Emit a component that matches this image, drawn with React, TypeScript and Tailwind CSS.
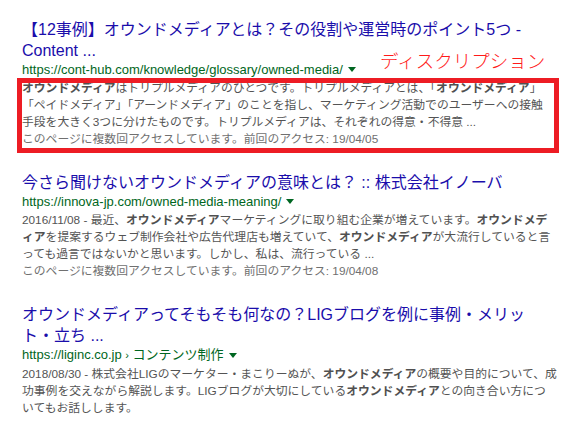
import React from 'react';

type Seg = { t: string; b?: boolean };
type Result = {
  title: string[];
  url: React.ReactNode;
  lines: Seg[][];
  visited?: string;
};

const results: Result[] = [
  {
    title: ['【12事例】オウンドメディアとは？その役割や運営時のポイント5つ -', 'Content ...'],
    url: 'https://cont-hub.com/knowledge/glossary/owned-media/',
    lines: [
      [
        { t: 'オウンドメディア', b: true },
        { t: 'はトリプルメディアのひとつです。トリプルメディアとは、「' },
        { t: 'オウンドメディア', b: true },
        { t: '」' },
      ],
      [{ t: '「ペイドメディア」「アーンドメディア」のことを指し、マーケティング活動でのユーザーへの接触' }],
      [{ t: '手段を大きく3つに分けたものです。トリプルメディアは、それぞれの得意・不得意 ...' }],
    ],
    visited: 'このページに複数回アクセスしています。前回のアクセス: 19/04/05',
  },
  {
    title: ['今さら聞けないオウンドメディアの意味とは？ :: 株式会社イノーバ'],
    url: 'https://innova-jp.com/owned-media-meaning/',
    lines: [
      [
        { t: '2016/11/08 - 最近、' },
        { t: 'オウンドメディア', b: true },
        { t: 'マーケティングに取り組む企業が増えています。' },
        { t: 'オウンドメデ', b: true },
      ],
      [
        { t: 'ィア', b: true },
        { t: 'を提案するウェブ制作会社や広告代理店も増えていて、' },
        { t: 'オウンドメディア', b: true },
        { t: 'が大流行していると言' },
      ],
      [{ t: 'っても過言ではないかと思います。しかし、私は、流行っている ...' }],
    ],
    visited: 'このページに複数回アクセスしています。前回のアクセス: 19/04/08',
  },
  {
    title: ['オウンドメディアってそもそも何なの？LIGブログを例に事例・メリッ', 'ト・立ち ...'],
    url: (
      <>
        https://liginc.co.jp <span className="text-[11px]">›</span> コンテンツ制作
      </>
    ),
    lines: [
      [
        { t: '2018/08/30 - 株式会社LIGのマーケター・まこりーぬが、' },
        { t: 'オウンドメディア', b: true },
        { t: 'の概要や目的について、成' },
      ],
      [
        { t: '功事例を交えながら解説します。LIGブログが大切にしている' },
        { t: 'オウンドメディア', b: true },
        { t: 'との向き合い方につ' },
      ],
      [{ t: 'いてもお話しします。' }],
    ],
  },
];

function Caret() {
  return (
    <svg width="8" height="5" viewBox="0 0 8 5" className="ml-[5px] inline-block align-middle">
      <path d="M0 0h8L4 5z" fill="#006621" />
    </svg>
  );
}

export default function App() {
  return (
    <div
      className="relative w-[575px] h-[425px] overflow-hidden bg-white pl-[22px] pt-[19px]"
      style={{ fontFamily: '"Liberation Sans", Arial, "Noto Sans CJK JP", sans-serif' }}
    >
      {/* annotation label */}
      <span className="absolute left-[380px] top-[50px] text-[18.5px] leading-[24px] font-light text-[#ff1a1a] whitespace-nowrap">
        ディスクリプション
      </span>

      <div className="flex flex-col gap-[24px]">
        {results.map((r, i) => (
          <div key={i} className="flex flex-col">
            <div className="text-[16px] leading-[21px] text-[#1a0dab] whitespace-nowrap">
              {r.title.map((l, j) => (
                <div key={j}>{l}</div>
              ))}
            </div>
            <div className="text-[13px] leading-[17px] text-[#006621] whitespace-nowrap flex items-center">
              <span>{r.url}</span>
              <Caret />
            </div>
            <div className="relative mt-[2px] text-[11.8px] leading-[17px] text-[#545454] whitespace-nowrap">
              {r.lines.map((line, j) => (
                <div key={j}>
                  {line.map((s, k) =>
                    s.b ? (
                      <b key={k} className="font-bold text-[#505050]">
                        {s.t}
                      </b>
                    ) : (
                      <span key={k}>{s.t}</span>
                    ),
                  )}
                </div>
              ))}
              {r.visited && <div className="text-[#707070]">{r.visited}</div>}
              {i === 0 && (
                <div className="absolute left-[-5px] top-[-2px] w-[542px] h-[75px] border-[5px] border-[#ed1c24]" />
              )}
            </div>
          </div>
        ))}
      </div>
    </div>
  );
}
